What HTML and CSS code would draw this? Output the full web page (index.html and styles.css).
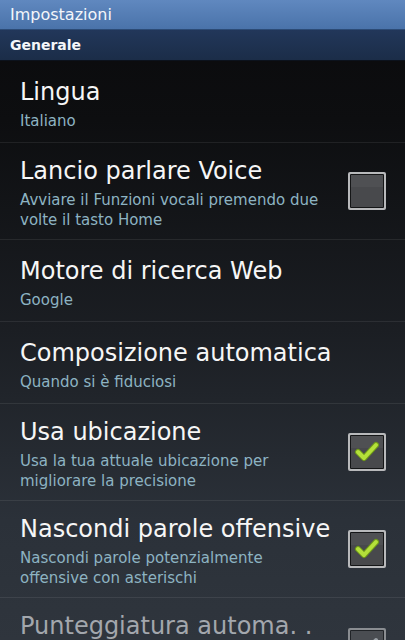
FILE: index.html
```html
<!DOCTYPE html>
<html lang="it">
<head>
    <meta charset="UTF-8">
    <meta name="viewport" content="width=device-width, initial-scale=1.0">
    <title>Impostazioni</title>
    <link rel="stylesheet" href="styles.css">
</head>
<body>
    <header class="title-bar">Impostazioni</header>
    <div class="category">Generale</div>

    <main class="prefs">
        <div class="pref">
            <div class="pref-text">
                <div class="pref-title">Lingua</div>
                <div class="pref-summary">Italiano</div>
            </div>
        </div>

        <div class="pref">
            <div class="pref-text">
                <div class="pref-title">Lancio parlare Voice</div>
                <div class="pref-summary">Avviare il Funzioni vocali premendo due volte il tasto Home</div>
            </div>
            <svg class="checkbox" viewBox="0 0 40 40">
                <rect x="1" y="1" width="38" height="38" rx="2" fill="#b8b9bb"/>
                <rect x="3" y="3" width="34" height="34" rx="1" fill="#151617"/>
                <rect x="4" y="4" width="32" height="32" fill="#48494c"/>
                <rect x="4" y="4" width="32" height="12" fill="#4f5053"/>
            </svg>
        </div>

        <div class="pref">
            <div class="pref-text">
                <div class="pref-title">Motore di ricerca Web</div>
                <div class="pref-summary">Google</div>
            </div>
        </div>

        <div class="pref">
            <div class="pref-text">
                <div class="pref-title">Composizione automatica</div>
                <div class="pref-summary">Quando si è fiduciosi</div>
            </div>
        </div>

        <div class="pref">
            <div class="pref-text">
                <div class="pref-title">Usa ubicazione</div>
                <div class="pref-summary">Usa la tua attuale ubicazione per migliorare la precisione</div>
            </div>
            <svg class="checkbox" viewBox="0 0 40 40">
                <rect x="1" y="1" width="38" height="38" rx="2" fill="#b8b9bb"/>
                <rect x="3" y="3" width="34" height="34" rx="1" fill="#151617"/>
                <rect x="4" y="4" width="32" height="32" fill="#48494c"/>
                <rect x="4" y="4" width="32" height="12" fill="#4f5053"/>
                <path d="M11 20 L17 26 L29 13" fill="none" stroke="#6f9a18" stroke-width="6" stroke-linecap="round" stroke-linejoin="round"/>
                <path d="M11 20 L17 26 L29 13" fill="none" stroke="#b4e03a" stroke-width="4" stroke-linecap="round" stroke-linejoin="round"/>
            </svg>
        </div>

        <div class="pref">
            <div class="pref-text">
                <div class="pref-title">Nascondi parole offensive</div>
                <div class="pref-summary">Nascondi parole potenzialmente offensive con asterischi</div>
            </div>
            <svg class="checkbox" viewBox="0 0 40 40">
                <rect x="1" y="1" width="38" height="38" rx="2" fill="#b8b9bb"/>
                <rect x="3" y="3" width="34" height="34" rx="1" fill="#151617"/>
                <rect x="4" y="4" width="32" height="32" fill="#48494c"/>
                <rect x="4" y="4" width="32" height="12" fill="#4f5053"/>
                <path d="M11 20 L17 26 L29 13" fill="none" stroke="#6f9a18" stroke-width="6" stroke-linecap="round" stroke-linejoin="round"/>
                <path d="M11 20 L17 26 L29 13" fill="none" stroke="#b4e03a" stroke-width="4" stroke-linecap="round" stroke-linejoin="round"/>
            </svg>
        </div>

        <div class="pref disabled">
            <div class="pref-text">
                <div class="pref-title">Punteggiatura automa. .</div>
            </div>
            <svg class="checkbox" viewBox="0 0 40 40">
                <rect x="1" y="1" width="38" height="38" rx="2" fill="#8a8d91"/>
                <rect x="3" y="3" width="34" height="34" rx="1" fill="#202327"/>
                <rect x="4" y="4" width="32" height="32" fill="#4a4d52"/>
                <path d="M11 20 L17 26 L29 13" fill="none" stroke="#9aa0a6" stroke-width="4" stroke-linecap="round" stroke-linejoin="round"/>
            </svg>
        </div>
    </main>
</body>
</html>
```

FILE: styles.css
```css
body {
    margin: 0;
    font-family: "DejaVu Sans", "Open Sans", sans-serif;
    background: linear-gradient(to bottom, #0a0a0c 0px, #0d0e10 120px, #1b1e23 330px, #2b3139 520px, #2f353d 640px);
    background-color: #2f353d;
    height: 640px;
    color: #f2f2f2;
    overflow: hidden;
}

.title-bar {
    height: 30px;
    box-sizing: border-box;
    padding: 0 10px;
    line-height: 30px;
    font-size: 16px;
    color: #f4f6fa;
    background: linear-gradient(to bottom, #6088bf, #4a73aa);
    border-bottom: 1px solid #2c4b76;
}

.category {
    height: 31px;
    box-sizing: border-box;
    padding: 0 10px;
    line-height: 30px;
    font-size: 14px;
    font-weight: bold;
    color: #f4f6fa;
    background: linear-gradient(to bottom, #22375a, #1b2d48);
    border-bottom: 1px solid #0c121c;
}

.pref {
    display: flex;
    align-items: center;
    gap: 14px;
    min-height: 82px;
    box-sizing: border-box;
    padding: 9px 18px 9px 20px;
    border-bottom: 1px solid rgba(255, 255, 255, 0.08);
}

.pref-text {
    flex: 1;
}

.pref-title {
    font-size: 24px;
    line-height: 38px;
    color: #f6f6f6;
    white-space: nowrap;
}

.pref-summary {
    font-size: 15px;
    line-height: 20px;
    color: #8db3c2;
}

.checkbox {
    flex: none;
    width: 40px;
    height: 40px;
}

/* last row runs off the screen, text sits at the top */
.disabled {
    min-height: 98px;
}

.disabled .pref-text {
    align-self: flex-start;
}

.disabled .pref-title {
    color: #a3a7ad;
}
```
